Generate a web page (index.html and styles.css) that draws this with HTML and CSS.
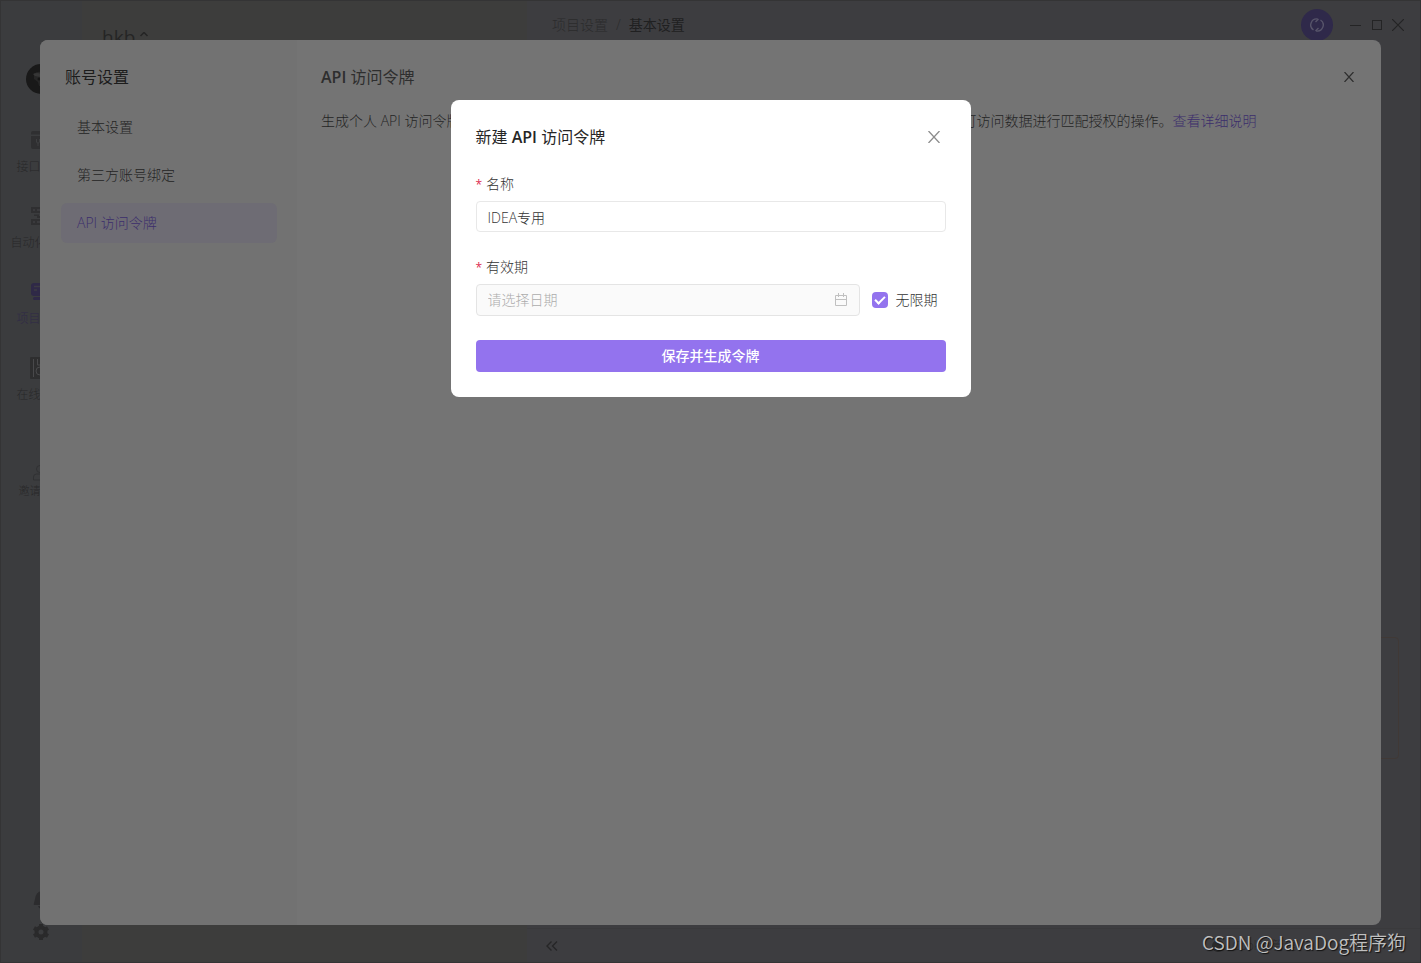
FILE: index.html
```html
<!DOCTYPE html>
<html lang="zh-CN">
<head>
<meta charset="utf-8">
<title>API 访问令牌</title>
<link rel="stylesheet" href="styles.css">
</head>
<body>
<div class="app">
  <nav class="rail">
    <div class="avatar">
      <svg width="30" height="30" viewBox="0 0 30 30"><circle cx="15" cy="15" r="15" fill="#191919"/><path d="M8 10q3-3 7-2 5-1 7 3l-1 6-3 5h-5l-1-4-4-3z" fill="#262626"/><path d="M7 10q4-2 8 0l-1 3-5-1z" fill="#363636"/><circle cx="13" cy="15" r="1.500" fill="#151515"/></svg>
    </div>
    <a class="rail-item" href="#">
      <svg width="18" height="22" viewBox="0 0 18 18" fill="#2f2f31"><path d="M2 0h14a2 2 0 0 1 2 2v1.500H0V2a2 2 0 0 1 2-2zM0 5h18v11a2 2 0 0 1-2 2H2a2 2 0 0 1-2-2z"/><path d="M5.500 8v3q0 1 1.500 1v3M8.500 8v3q0 1-1.500 1M12 8v7" stroke="#3e3f41" fill="none"/></svg>
      <span>接口管理</span>
    </a>
    <a class="rail-item" href="#">
      <svg width="18" height="22" viewBox="0 0 18 18" fill="#2f2f31"><path d="M0 0h18v6H0zM0 12h18v6H0zM3 7.500h5V9h7v2H6V9H3z"/><path d="M2 3h2M6 3h8M2 15h2M6 15h8" stroke="#46474a"/></svg>
      <span>自动化测试</span>
    </a>
    <a class="rail-item active" href="#">
      <svg width="18" height="22" viewBox="0 0 18 18"><rect width="18" height="13" rx="3" fill="#2f2947"/><path d="M3 3.500h12M3 7h3M9 7h6" stroke="#3c3b43" stroke-width="1.500"/><rect x="2" y="14" width="14" height="3" rx="1.500" fill="#2f2947"/></svg>
      <span>项目设置</span>
    </a>
    <a class="rail-item" href="#">
      <svg width="20" height="22" viewBox="0 0 20 22"><rect width="20" height="22" rx="1" fill="#2e2e2f"/><path d="M3.500 2v18M7.500 2v6h5V2" stroke="#49494b" fill="none"/><circle cx="10" cy="14" r="4" fill="none" stroke="#49494b"/></svg>
      <span>在线分享</span>
    </a>
    <a class="rail-item invite" href="#">
      <svg width="16" height="16" viewBox="0 0 16 16" fill="none" stroke="#303133"><circle cx="7" cy="4" r="3.500"/><path d="M.5 15v-3q0-3 3-3h6M.5 15H9M12.500 9v6M9.500 12h6"/></svg>
      <span>邀请成员</span>
    </a>
    <div class="rail-tools">
      <svg width="16" height="18" viewBox="0 0 16 18" fill="#2c2c2e"><path d="M8 0q5 1 6 8l1 4q1 2-1 2H2q-2 0-1-2l1-4Q3 1 8 0zM5 15h6q-1 3-3 3t-3-3z"/></svg>
      <svg width="18" height="18" viewBox="0 0 18 18"><circle cx="9" cy="9" r="4.500" fill="none" stroke="#2a2a2b" stroke-width="4"/><path d="M9 1v4M9 13v4M2 5l3.500 2M12.500 11l3.500 2M2 13l3.500-2M12.500 7L16 5" stroke="#2a2a2b" stroke-width="4"/></svg>
    </div>
  </nav>
  <aside class="middle">
    <div class="project">hkb
      <svg width="10" height="10" viewBox="0 0 10 10" fill="none" stroke="#252525" stroke-width="1.500"><path d="M1.500 4L5 .5 8.500 4"/></svg>
    </div>
  </aside>
  <div class="workspace">
    <header class="topbar">
      <div class="crumbs"><a href="#">项目设置</a><span>/</span><b>基本设置</b></div>
      <div class="window-tools">
        <button class="sync" aria-label="同步"><svg width="14" height="14" viewBox="0 0 14 14" fill="none" stroke="#57546a" stroke-width="1.400"><path d="M3.500 12A6 6 0 0 1 8 1.100M10.500 2A6 6 0 0 1 6 12.900M8.500 1L5.500 4M5.500 13L8.500 10"/></svg></button>
        <button aria-label="最小化"><svg width="12" height="12" viewBox="0 0 12 12" stroke="#242425"><path d="M0 6.500h11"/></svg></button>
        <button aria-label="最大化"><svg width="12" height="12" viewBox="0 0 12 12" fill="none" stroke="#242425"><rect x="1.500" y="1.500" width="9" height="9"/></svg></button>
        <button aria-label="关闭窗口"><svg width="12" height="12" viewBox="0 0 12 12" stroke="#242425" stroke-width="1.200"><path d="M0 0l12 12M12 0L0 12"/></svg></button>
      </div>
    </header>
    <div class="work-body"><div class="notice"></div></div>
    <footer class="statusbar">
      <button class="fold" aria-label="收起"><svg width="12" height="12" viewBox="0 0 12 12" fill="none" stroke="#262627" stroke-width="1.400"><path d="M5.500 1.500L1 6l4.500 4.500M11 1.500L6.500 6l4.500 4.500"/></svg></button>
      <div class="cookie"><svg width="12" height="12" viewBox="0 0 12 12"><circle cx="6" cy="6" r="6" fill="#29292a"/></svg>Cookie 管理</div>
    </footer>
  </div>
</div>

<section class="account">
  <div class="account-nav">
    <h2>账号设置</h2>
    <a href="#">基本设置</a>
    <a href="#">第三方账号绑定</a>
    <a href="#" class="active">API 访问令牌</a>
  </div>
  <div class="account-main">
    <div class="account-head">
      <h2><b>API</b> 访问令牌</h2>
      <button class="close" aria-label="关闭设置"><svg width="10" height="10" viewBox="0 0 10 10" stroke="#2e2e2e" stroke-width="1.200"><path d="M.5 0l9 10M9.500 0l-9 10"/></svg></button>
    </div>
    <p>生成个人 API 访问令牌后，可在脚本 / 自定义的应用程序当中直接使用此令牌进行身份验证，对用户当前可访问数据进行匹配授权的操作。<a href="#">查看详细说明</a></p>
  </div>
</section>

<div class="modal-layer">
  <form class="modal" role="dialog" aria-labelledby="modal-title">
    <div class="modal-head">
      <h1 id="modal-title">新建 <b>API</b> 访问令牌</h1>
      <button type="button" class="close" aria-label="关闭"><svg width="12" height="12" viewBox="0 0 12 12" stroke="#8c8c8c" stroke-width="1.300"><path d="M.5 0l11 12M11.500 0L.5 12"/></svg></button>
    </div>
    <div class="field">
      <label for="token-name"><i>*</i>名称</label>
      <input id="token-name" class="text" type="text" value="IDEA专用">
    </div>
    <div class="field">
      <label for="token-date"><i>*</i>有效期</label>
      <div class="date-row">
        <div class="date">
          <input id="token-date" type="text" placeholder="请选择日期" disabled>
          <svg width="14" height="14" viewBox="0 0 14 14" fill="none" stroke="#c0c0c0"><path d="M1.500 2.500h11v10h-11zM1.500 6.500h11M4.500 0v4M9.500 0v4"/></svg>
        </div>
        <label class="check"><input type="checkbox" checked>无限期</label>
      </div>
    </div>
    <button type="submit" class="submit">保存并生成令牌</button>
  </form>
</div>
<div class="watermark">CSDN @JavaDog程序狗</div>
</body>
</html>
```
FILE: styles.css
```css
* { box-sizing: border-box; }
body {
  margin: 0;
  height: 100vh;
  position: relative;
  overflow: hidden;
  font: 14px/22px "Open Sans", "Noto Sans CJK SC", sans-serif;
  font-weight: 300;
  color: #242424;
}
h1, h2, p { margin: 0; }
h1, h2 { font-size: 16px; line-height: 24px; font-weight: 400; }
h1 b, h2 b { font-weight: 600; }
a { color: inherit; text-decoration: none; }
button { border: 0; padding: 0; background: none; font: inherit; display: flex; align-items: center; justify-content: center; }
svg { display: block; flex: none; }

/* application window */
.app { display: flex; height: 100%; border: 1px solid #343435; background: #3d3d40; }
.rail { width: 81px; background: #3b3c3e; display: flex; flex-direction: column; align-items: center; padding: 63px 2px 21px 0; }
.avatar { margin-bottom: 35px; }
.rail-item { height: 76px; display: flex; flex-direction: column; align-items: center; gap: 7px; font-size: 12px; line-height: 18px; color: #282829; white-space: nowrap; }
.rail-item.active { color: #2f2947; }
.rail-item.invite { margin-top: 32px; gap: 1px; font-size: 11px; }
.rail-tools { margin-top: auto; display: flex; flex-direction: column; align-items: center; gap: 14px; }
.middle { width: 445px; background: #3d3d3c; padding: 22px 20px; }
.project { display: flex; align-items: center; gap: 4px; font-size: 19px; line-height: 28px; font-weight: 400; color: #252525; }
.workspace { flex: 1; min-width: 0; display: flex; flex-direction: column; }
.topbar { height: 48px; padding: 0 16px 0 25px; display: flex; align-items: center; justify-content: space-between; }
.crumbs { display: flex; gap: 8px; color: #2b2b2c; }
.crumbs b { font-weight: 400; color: #202021; }
.window-tools { display: flex; align-items: center; gap: 9px; }
.window-tools .sync { width: 32px; height: 32px; margin-right: 8px; border-radius: 50%; background: #2f294a; }
.work-body { flex: 1; display: flex; flex-direction: column; justify-content: flex-end; padding: 0 21px 169px 24px; }
.notice { height: 122px; border: 1px solid #403936; border-radius: 4px; }
.statusbar { height: 34px; padding: 0 124px 0 19px; border-top: 1px solid #3a3a3c; display: flex; align-items: center; justify-content: space-between; }
.cookie { display: flex; align-items: center; gap: 8px; font-size: 12px; color: #29292a; }

/* account settings panel */
.account { position: absolute; inset: 40px 40px 38px; display: flex; border-radius: 8px; background: #747474; overflow: hidden; }
.account-nav { width: 257px; padding: 25px 20px 0 21px; background: #727272; display: flex; flex-direction: column; gap: 8px; }
.account-nav h2 { padding-left: 4px; margin-bottom: 10px; color: #1c1c1c; }
.account-nav a { height: 40px; padding: 9px 16px; border-radius: 6px; }
.account-nav .active { background: #6e6c74; color: #3c2e6c; }
.account-main { flex: 1; min-width: 0; padding: 25px 24px; }
.account-head { display: flex; align-items: center; justify-content: space-between; margin-bottom: 21px; }
.account-head h2 { color: #2e2e2e; }
.account-main p { white-space: nowrap; }
.account-main p a { color: #3c2e6c; }
.close { width: 16px; height: 24px; }

/* new token dialog */
.modal-layer { position: absolute; inset: 0; display: flex; justify-content: center; align-items: flex-start; padding-top: 100px; }
.modal { width: 520px; padding: 25px; border-radius: 8px; background: #fff; display: flex; flex-direction: column; gap: 24px; color: #333; }
.modal-head { display: flex; justify-content: space-between; align-items: center; padding-right: 4px; }
.modal h1 { color: #262626; }
.field { display: flex; flex-direction: column; gap: 6px; }
.field i { color: #dc2b50; font-size: 12px; line-height: 12px; font-style: normal; margin-right: 4px; font-weight: 400; }
.field input { font: inherit; color: #333; }
.text { height: 31px; padding: 0 11px; border: 1px solid #e8e8e8; border-radius: 4px; background: #fff; }
.date-row { display: flex; align-items: center; gap: 12px; }
.date { width: 384px; height: 32px; padding: 0 11px; display: flex; align-items: center; border: 1px solid #e4e4e4; border-radius: 4px; background: #fafafa; }
.date input { flex: 1; min-width: 0; padding: 0; border: 0; background: none; }
.date input::placeholder { color: #acacac; }
.check { display: flex; align-items: center; gap: 8px; }
.check input { appearance: none; width: 16px; height: 16px; margin: 0; border-radius: 4px; background: #9373ee; display: flex; align-items: center; justify-content: center; }
.check input::after { content: ""; width: 6px; height: 10px; margin-bottom: 2px; border: solid #fff; border-width: 0 2px 2px 0; transform: rotate(45deg); box-sizing: border-box; }
.modal .submit { height: 32px; border-radius: 4px; background: #9373ee; color: #fff; font-weight: 500; }

.watermark { position: absolute; right: 15px; bottom: 7px; font: 19px/28px "Noto Sans CJK SC", sans-serif; font-weight: 350; color: #c0c0c0; text-shadow: 1px 1px 1px #111; }
```
